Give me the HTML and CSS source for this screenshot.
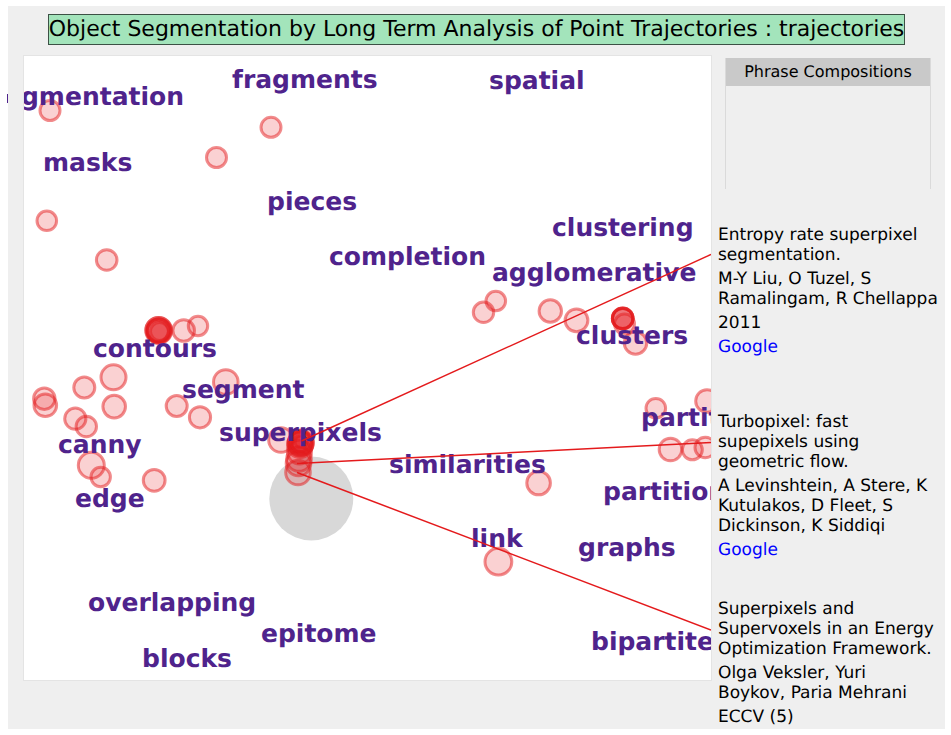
FILE: index.html
```
<!DOCTYPE html>
<html lang="en">
<head>
<meta charset="utf-8">
<title>Object Segmentation : trajectories</title>
<link rel="stylesheet" href="styles.css">
</head>
<body>
<div class="page">
  <h1 class="title">Object Segmentation by Long Term Analysis of Point Trajectories : trajectories</h1>
  <div class="content">
    <main class="map">
      <svg class="plot" role="img" aria-label="Map of phrases and papers">
        <g transform="translate(-24 -56)">
          <circle class="focus" cx="311.300" cy="498.500" r="42"/>
          <g class="dots">
            <circle cx="50" cy="110.500" r="10"/>
            <circle cx="271" cy="127.300" r="10"/>
            <circle cx="216.500" cy="157.500" r="10"/>
            <circle cx="46.800" cy="220.800" r="9.800"/>
            <circle cx="106.700" cy="260" r="10.300"/>
            <circle cx="158.700" cy="330.500" r="13"/>
            <circle cx="158.500" cy="330" r="12.500"/>
            <circle cx="159" cy="331" r="12"/>
            <circle cx="158.500" cy="330.500" r="11.500"/>
            <circle cx="158" cy="331" r="10.500"/>
            <circle cx="159.500" cy="331.500" r="9"/>
            <circle cx="183.700" cy="330.500" r="10.800"/>
            <circle cx="198" cy="326" r="9.700"/>
            <circle cx="113.500" cy="377.300" r="12.500"/>
            <circle cx="84.300" cy="387.500" r="10.500"/>
            <circle cx="114.200" cy="406.600" r="11.300"/>
            <circle cx="44.300" cy="398.700" r="10.700"/>
            <circle cx="45.300" cy="405.300" r="11.300"/>
            <circle cx="75.300" cy="418.700" r="10.600"/>
            <circle cx="86.300" cy="426.500" r="10.200"/>
            <circle cx="225.800" cy="382" r="12.300"/>
            <circle cx="176.700" cy="406" r="10.500"/>
            <circle cx="200" cy="417.300" r="10.600"/>
            <circle cx="91.300" cy="465.300" r="13"/>
            <circle cx="100.700" cy="477" r="9.700"/>
            <circle cx="154.200" cy="480.300" r="10.900"/>
            <circle cx="281" cy="440" r="12.300"/>
            <circle cx="298" cy="472.500" r="12.300"/>
            <circle cx="298.500" cy="463.500" r="12.300"/>
            <circle cx="299" cy="459" r="12.300"/>
            <circle cx="299.500" cy="452" r="12"/>
            <circle cx="300" cy="445" r="12.500"/>
            <circle cx="300.500" cy="443.500" r="12.500"/>
            <circle cx="301" cy="442.500" r="12.500"/>
            <circle cx="300.500" cy="443" r="11.500"/>
            <circle cx="301" cy="443" r="10"/>
            <circle cx="300" cy="444" r="8"/>
            <circle cx="301" cy="442" r="6"/>
            <circle cx="301" cy="441" r="10.500"/>
            <circle cx="495.800" cy="301" r="9.800"/>
            <circle cx="483.500" cy="312.300" r="10.200"/>
            <circle cx="550.300" cy="311" r="11.200"/>
            <circle cx="576.500" cy="320.300" r="11.400"/>
            <circle cx="622.700" cy="318.300" r="10.300"/>
            <circle cx="622.700" cy="318.300" r="10.300"/>
            <circle cx="622.700" cy="318.500" r="10.300"/>
            <circle cx="622.700" cy="318.700" r="10.300"/>
            <circle cx="624.500" cy="324" r="10"/>
            <circle cx="635.500" cy="343" r="11.200"/>
            <circle cx="538.600" cy="483" r="11.800"/>
            <circle cx="498.400" cy="561.700" r="13.400"/>
            <circle cx="655.800" cy="408.200" r="9.800"/>
            <circle cx="707" cy="401" r="11.300"/>
            <circle cx="670.500" cy="449.500" r="11.300"/>
            <circle cx="692.300" cy="449.800" r="10"/>
            <circle cx="705.300" cy="447.500" r="10.300"/>
          </g>
          <g class="phrases">
            <text x="184" y="105" text-anchor="end">segmentation</text>
            <text x="232" y="88">fragments</text>
            <text x="489" y="89">spatial</text>
            <text x="43" y="171">masks</text>
            <text x="267" y="210">pieces</text>
            <text x="552" y="236">clustering</text>
            <text x="329" y="265">completion</text>
            <text x="492" y="281">agglomerative</text>
            <text x="93" y="357">contours</text>
            <text x="576" y="344">clusters</text>
            <text x="182" y="398">segment</text>
            <text x="641" y="426">partition</text>
            <text x="219" y="441">superpixels</text>
            <text x="58" y="453">canny</text>
            <text x="389" y="473">similarities</text>
            <text x="603" y="500">partition</text>
            <text x="75" y="507">edge</text>
            <text x="471" y="547">link</text>
            <text x="578" y="556">graphs</text>
            <text x="88" y="611">overlapping</text>
            <text x="261" y="642">epitome</text>
            <text x="591" y="650">bipartite</text>
            <text x="142" y="667">blocks</text>
          </g>
          <g class="links">
            <path d="M301.500 441L711 254.500"/>
            <path d="M297 463.500L711 442.500"/>
            <path d="M297 472.500L711 630"/>
          </g>
        </g>
      </svg>
    </main>
    <aside class="sidebar">
      <section class="compositions">
        <h2>Phrase Compositions</h2>
      </section>
      <article class="paper">
        <p>Entropy rate superpixel<br>segmentation.</p>
        <p>M-Y Liu, O Tuzel, S<br>Ramalingam, R Chellappa</p>
        <p>2011</p>
        <p><a href="#">Google</a></p>
      </article>
      <article class="paper">
        <p>Turbopixel: fast<br>supepixels using<br>geometric flow.</p>
        <p>A Levinshtein, A Stere, K<br>Kutulakos, D Fleet, S<br>Dickinson, K Siddiqi</p>
        <p><a href="#">Google</a></p>
      </article>
      <article class="paper">
        <p>Superpixels and<br>Supervoxels in an Energy<br>Optimization Framework.</p>
        <p>Olga Veksler, Yuri<br>Boykov, Paria Mehrani</p>
        <p>ECCV (5)</p>
      </article>
    </aside>
  </div>
</div>
</body>
</html>
```
FILE: styles.css
```
body {
  margin: 0;
  background: #fff;
  color: #000;
  font-family: "DejaVu Sans", sans-serif;
  text-rendering: geometricPrecision;
}

.page {
  margin: 6px 6px 6px 8px;
  padding: 8px 0 2px;
  background: #efefef;
  position: relative;
}

/* tail of the long phrase that runs out past the panel */
.page::before {
  content: "";
  position: absolute;
  left: -1px;
  top: 88px;
  width: 1px;
  height: 9px;
  background: #4f238c;
}

.title {
  width: fit-content;
  margin: 0 auto 11px;
  border: 1px solid #3c5145;
  background: #a3e4bb;
  font-size: 22px;
  font-weight: 400;
  line-height: 29px;
  white-space: nowrap;
}

.content {
  display: flex;
  align-items: flex-start;
  padding-left: 16px;
}

.map {
  flex: 1;
  min-width: 0;
  background: #fff;
  outline: 1px solid #e4e4e4;
}

.plot {
  display: block;
  width: 100%;
  height: 624px;
}

.focus { fill: #d8d8d8; }

.dots {
  fill: #e41a1c;
  fill-opacity: .2;
  stroke: #e41a1c;
  stroke-opacity: .5;
  stroke-width: 3px;
}

.phrases {
  fill: #4f238c;
  font-size: 25px;
  font-weight: 700;
}

.links {
  fill: none;
  stroke: #e41a1c;
  stroke-width: 1.5px;
}

.sidebar {
  flex: 0 0 227px;
  padding: 2px 0 0 7px;
}

.compositions {
  height: 131px;
  margin: 0 14px 36px 7px;
  border: solid #dadada;
  border-width: 0 1px;
}

.compositions h2 {
  margin: 0;
  background: #c9c9c9;
  font-size: 16px;
  font-weight: 400;
  line-height: 28px;
  text-align: center;
}

.paper {
  min-height: 187px;
  font-size: 17px;
  line-height: 20px;
  white-space: nowrap;
}

.paper:last-child { min-height: 0; }

.paper p { margin: 0 0 4px; }

.paper p:last-child { margin-bottom: 0; }

.paper a {
  color: #00f;
  text-decoration: none;
}
```
